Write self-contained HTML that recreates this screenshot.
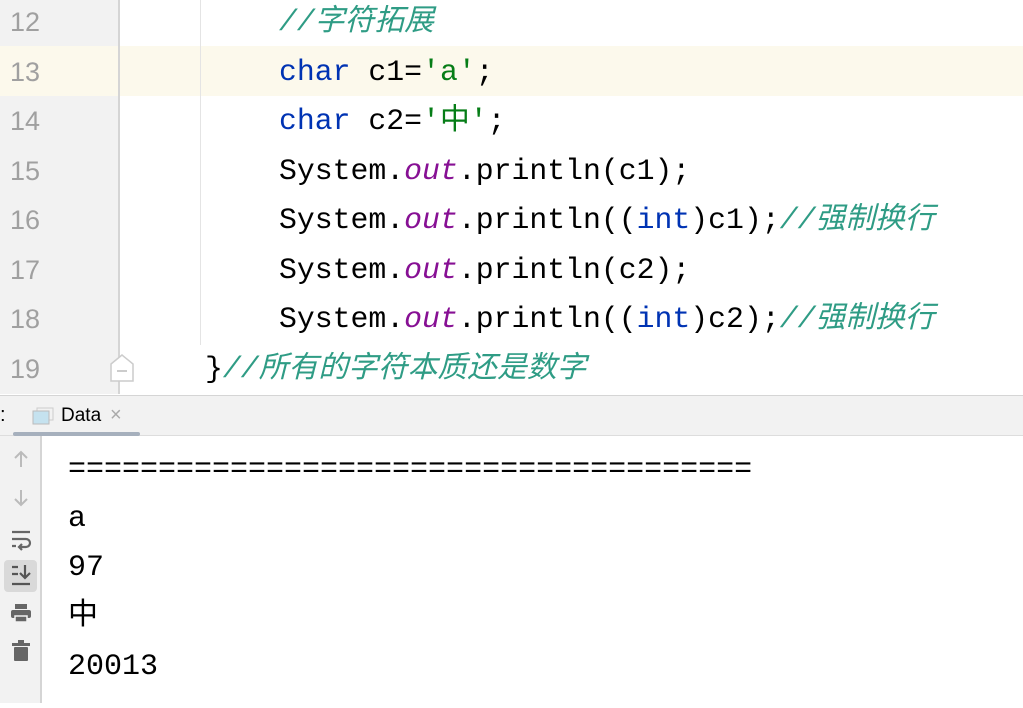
<!DOCTYPE html>
<html><head><meta charset="utf-8"><style>
*{margin:0;padding:0;box-sizing:border-box}
body{width:1023px;height:703px;overflow:hidden;background:#fff;position:relative;font-family:"Liberation Mono","Noto Sans CJK SC",monospace}
.gut{position:absolute;left:0;top:0;width:120px;height:394px;background:#f2f2f2;border-right:2px solid #d5d5d5}
.cur{position:absolute;left:0;top:46px;width:1023px;height:50px;background:#fcf9ec}
.guide{position:absolute;left:200px;top:0;width:1px;height:345px;background:#e4e4e4}
.ln{position:absolute;left:10px;font-size:27px;color:#a0a0a0;font-family:"Liberation Sans",sans-serif;line-height:50px}
.code{position:absolute;left:0;font-size:29.8px;line-height:50px;white-space:pre;color:#000}
.k{color:#0033b3}.s{color:#067d17}.f{color:#871094;font-style:italic}
.c{color:#2f9c85;font-style:italic;font-family:"Liberation Mono","Noto Sans CJK SC",sans-serif}
.tab{position:absolute;left:0;top:395px;width:1023px;height:41px;background:#f2f2f2;border-top:1px solid #d5d5d5;border-bottom:1px solid #ddd}
.tb{position:absolute;left:0;top:436px;width:42px;height:267px;background:#f2f2f2;border-right:2px solid #d5d5d5}
.out{position:absolute;left:68px;font-size:30px;line-height:49px;white-space:pre}
</style></head><body>
<div class="gut"></div>
<div class="cur"></div>
<div class="gut" style="background:#fcf9ec;top:46px;height:50px;"></div>
<div class="guide"></div>
<div class="ln" style="top:-3px">12</div>
<div class="ln" style="top:47px">13</div>
<div class="ln" style="top:96px">14</div>
<div class="ln" style="top:146px">15</div>
<div class="ln" style="top:195px">16</div>
<div class="ln" style="top:245px">17</div>
<div class="ln" style="top:294px">18</div>
<div class="ln" style="top:344px">19</div>
<svg style="position:absolute;left:110px;top:354px" width="24" height="28"><path d="M1 10 L12 1 L23 10 L23 27 L1 27 Z" fill="#fff" stroke="#ccc" stroke-width="1.5"/><path d="M7 17 H17" stroke="#bbb" stroke-width="1.5"/></svg>
<div class="code" style="top:-3px;left:279px"><span class="c">//字符拓展</span></div>
<div class="code" style="top:47px;left:279px"><span class="k">char</span> c1=<span class="s">'a'</span>;</div>
<div class="code" style="top:96px;left:279px"><span class="k">char</span> c2=<span class="s">'中'</span>;</div>
<div class="code" style="top:146px;left:279px">System.<span class="f">out</span>.println(c1);</div>
<div class="code" style="top:195px;left:279px">System.<span class="f">out</span>.println((<span class="k">int</span>)c1);<span class="c">//强制换行</span></div>
<div class="code" style="top:245px;left:279px">System.<span class="f">out</span>.println(c2);</div>
<div class="code" style="top:294px;left:279px">System.<span class="f">out</span>.println((<span class="k">int</span>)c2);<span class="c">//强制换行</span></div>
<div class="code" style="top:344px;left:205px">}<span class="c">//所有的字符本质还是数字</span></div>
<div class="tab">
<div style="position:absolute;left:0;top:8px;font:20px 'Liberation Sans',sans-serif;color:#000">:</div>
<svg style="position:absolute;left:32px;top:11px" width="22" height="18"><rect x="5" y="1" width="16" height="12" fill="none" stroke="#ccc"/><rect x="1" y="4" width="16" height="13" fill="#c5e2ef" stroke="#bbb"/></svg>
<div style="position:absolute;left:61px;top:9px;font:19px 'Liberation Sans',sans-serif;color:#000">Data</div>
<div style="position:absolute;left:110px;top:8px;font:20px 'Liberation Sans',sans-serif;color:#aaa">×</div>
<div style="position:absolute;left:13px;top:36px;width:127px;height:4px;background:#a6b0bd;border-radius:2px"></div>
</div>
<div class="tb">
<svg width="42" height="267">
<g stroke="#bbb" stroke-width="2" fill="none"><path d="M21 31V16M15 22l6-6 6 6"/><path d="M21 54v15M15 63l6 6 6-6"/></g>
<g stroke="#666" stroke-width="2.2" fill="none"><path d="M12 96h18M12 103h14a4 4 0 0 1 0 8h-6M22 108l-3 3 3 3M12 110h4"/></g>
<rect x="4" y="124" width="33" height="32" rx="4" fill="#d9d9d9"/>
<g stroke="#555" stroke-width="2.2" fill="none"><path d="M12 131h6M12 138h6M12 148h18M25 129v13M20 137l5 5 5-5"/></g>
<g fill="#666"><rect x="15" y="168" width="12" height="5"/><rect x="11" y="174" width="20" height="8" rx="2"/><rect x="15" y="180" width="12" height="6" fill="#666" stroke="#f2f2f2" stroke-width="1.5"/></g>
<g fill="#666"><rect x="12" y="207" width="18" height="3"/><rect x="18" y="204" width="6" height="3"/><rect x="14" y="211" width="14" height="14" rx="1"/></g>
</svg>
</div>
<div class="out" style="top:446px">======================================</div>
<div class="out" style="top:495px">a</div>
<div class="out" style="top:544px">97</div>
<div class="out" style="top:593px;font-family:'Liberation Mono','Noto Sans CJK SC',monospace">中</div>
<div class="out" style="top:643px">20013</div>
</body></html>
